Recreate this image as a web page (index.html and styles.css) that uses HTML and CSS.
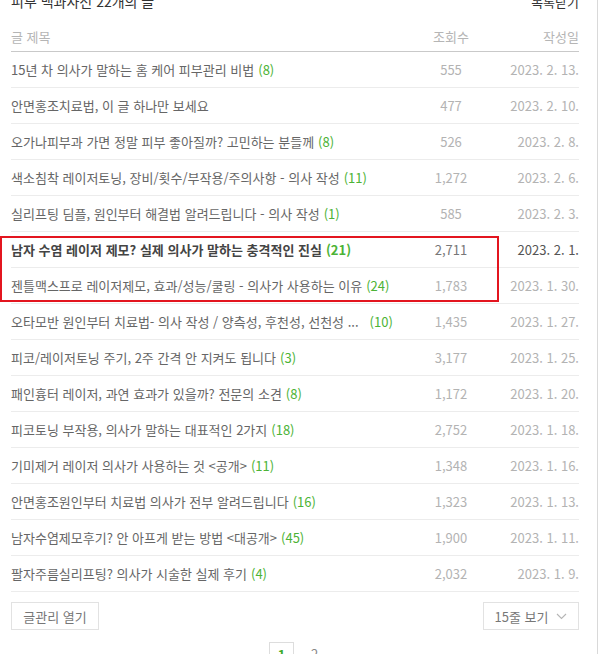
FILE: index.html
```html
<!DOCTYPE html>
<html lang="ko">
<head>
    <meta charset="UTF-8">
    <title>피부 백과사전 - 글 목록</title>
    <link rel="stylesheet" href="styles.css">
</head>
<body>
    <div class="wrap">
        <div class="top">
            <h2 class="cat-title">피부 백과사전 <span class="cat-count">22개의 글</span></h2>
            <a class="close-link" href="#">목록닫기</a>
        </div>

        <div class="post-table">
            <div class="row head">
                <div class="col-title">글 제목</div>
                <div class="col-views">조회수</div>
                <div class="col-date">작성일</div>
            </div>
            <div id="rows"></div>
            <div class="highlight"></div>
        </div>

        <div class="bottom">
            <button class="btn">글관리 열기</button>
            <button class="btn btn-select">15줄 보기
                <svg width="11" height="7" viewBox="0 0 11 7"><path d="M1 1l4.5 4.5L10 1" fill="none" stroke="#b5b5b5" stroke-width="1.1"/></svg>
            </button>
        </div>

        <div class="paging">
            <span class="page current">1</span>
            <span class="page">2</span>
        </div>
    </div>

    <script>
        const posts = [
            ['15년 차 의사가 말하는 홈 케어 피부관리 비법', 8, '555', '2023. 2. 13.'],
            ['안면홍조치료법, 이 글 하나만 보세요', 0, '477', '2023. 2. 10.'],
            ['오가나피부과 가면 정말 피부 좋아질까? 고민하는 분들께', 8, '526', '2023. 2. 8.'],
            ['색소침착 레이저토닝, 장비/횟수/부작용/주의사항 - 의사 작성', 11, '1,272', '2023. 2. 6.'],
            ['실리프팅 딤플, 원인부터 해결법 알려드립니다 - 의사 작성', 1, '585', '2023. 2. 3.'],
            ['남자 수염 레이저 제모? 실제 의사가 말하는 충격적인 진실', 21, '2,711', '2023. 2. 1.'],
            ['젠틀맥스프로 레이저제모, 효과/성능/쿨링 - 의사가 사용하는 이유', 24, '1,783', '2023. 1. 30.'],
            ['오타모반 원인부터 치료법- 의사 작성 / 양측성, 후천성, 선천성 ...', 10, '1,435', '2023. 1. 27.'],
            ['피코/레이저토닝 주기, 2주 간격 안 지켜도 됩니다', 3, '3,177', '2023. 1. 25.'],
            ['패인흉터 레이저, 과연 효과가 있을까? 전문의 소견', 8, '1,172', '2023. 1. 20.'],
            ['피코토닝 부작용, 의사가 말하는 대표적인 2가지', 18, '2,752', '2023. 1. 18.'],
            ['기미제거 레이저 의사가 사용하는 것 <공개>', 11, '1,348', '2023. 1. 16.'],
            ['안면홍조원인부터 치료법 의사가 전부 알려드립니다', 16, '1,323', '2023. 1. 13.'],
            ['남자수염제모후기? 안 아프게 받는 방법 <대공개>', 45, '1,900', '2023. 1. 11.'],
            ['팔자주름실리프팅? 의사가 시술한 실제 후기', 4, '2,032', '2023. 1. 9.']
        ];

        const rows = document.getElementById('rows');
        posts.forEach(function (p, i) {
            const row = document.createElement('div');
            row.className = 'row' + (i === 5 ? ' current' : '');

            const title = document.createElement('div');
            title.className = 'col-title';
            const text = document.createElement('span');
            text.className = 'title-text' + (i === 7 ? ' cut' : '');
            text.textContent = p[0];
            title.appendChild(text);
            if (p[1]) {
                const cmt = document.createElement('span');
                cmt.className = 'cmt';
                cmt.textContent = '(' + p[1] + ')';
                title.appendChild(cmt);
            }

            const views = document.createElement('div');
            views.className = 'col-views';
            views.textContent = p[2];

            const date = document.createElement('div');
            date.className = 'col-date';
            date.textContent = p[3];

            row.append(title, views, date);
            rows.appendChild(row);
        });
    </script>
</body>
</html>
```

FILE: styles.css
```css
* {
    margin: 0;
    padding: 0;
    box-sizing: border-box;
}

body {
    font-family: "Noto Sans CJK KR", "Noto Sans", sans-serif;
    font-size: 13px;
    color: #666;
    background: #fff;
    overflow: hidden;
}

.wrap {
    width: 598px;
    min-height: 654px;
    padding: 0 18px 0 11px;
    border-right: 1px solid #d9d9d9;
}

.top {
    display: flex;
    justify-content: space-between;
    align-items: center;
    height: 20px;
    margin-top: -9px;
}

.cat-title {
    font-size: 14px;
    font-weight: normal;
    color: #333;
}

.cat-count {
    color: #333;
}

.close-link {
    color: #333;
    text-decoration: none;
    font-size: 13px;
}

.post-table {
    position: relative;
    margin-top: 10px;
}

.row {
    display: grid;
    grid-template-columns: 1fr 80px 88px;
    align-items: center;
    height: 36px;
    border-bottom: 1px solid #ececec;
}

.row.head {
    height: 31px;
    border-bottom-color: #c9c9c9;
    color: #b5b5b5;
}

.col-title {
    white-space: nowrap;
    overflow: hidden;
}

.col-views {
    text-align: center;
    color: #b3b3b3;
}

.col-date {
    text-align: right;
    color: #b3b3b3;
}

.row.head .col-views,
.row.head .col-date {
    color: #b5b5b5;
}

.cmt {
    color: #4cb336;
    margin-left: 4px;
}

.title-text.cut + .cmt {
    margin-left: 11px;
}

.row.current .col-title {
    font-weight: bold;
    color: #444;
}

.row.current .col-views {
    color: #777;
}

.row.current .col-date {
    color: #555;
}

.highlight {
    position: absolute;
    left: -11px;
    top: 215px;
    width: 499px;
    height: 66px;
    border: 2px solid #e3151f;
    pointer-events: none;
}

.bottom {
    display: flex;
    justify-content: space-between;
    margin-top: 10px;
}

.btn {
    height: 28px;
    padding: 0;
    border: 1px solid #e2e2e2;
    background: #fff;
    color: #777;
    font-family: inherit;
    font-size: 13px;
    white-space: nowrap;
}

.btn:first-child {
    width: 88px;
}

.btn-select {
    width: 96px;
    display: flex;
    align-items: center;
    justify-content: center;
    gap: 8px;
}

.paging {
    display: flex;
    justify-content: center;
    gap: 8px;
    margin-top: 12px;
    padding-left: 6px;
}

.page {
    display: inline-block;
    width: 25px;
    height: 25px;
    line-height: 24px;
    text-align: center;
    color: #888;
}

.page.current {
    border: 1px solid #ddd;
    color: #3faa2a;
    font-weight: bold;
}
```
